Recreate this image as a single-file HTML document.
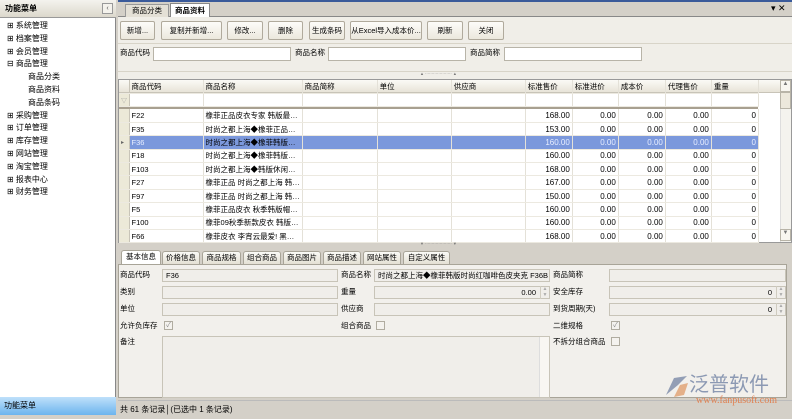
<!DOCTYPE html>
<html><head><meta charset="utf-8"><style>
*{box-sizing:border-box;margin:0;padding:0}
body{width:792px;height:419px;overflow:hidden;background:#d4d0c8;font:7.5px "Liberation Sans","Noto Sans CJK SC",sans-serif;color:#000;position:relative}
.a{position:absolute;white-space:nowrap}
.btn{position:absolute;top:21px;height:19px;border:1px solid #b0aa9c;border-radius:2px;background:linear-gradient(#fdfcf9,#ece8dd);text-align:center;line-height:17px;font-size:7.5px;white-space:nowrap}
.inp{position:absolute;height:14px;background:#fff;border:1px solid #b8b4a8}
.fin{position:absolute;height:13px;background:#f0eeea;border:1px solid #c8c4b8;font-size:7.5px;line-height:11px;padding:0 3px;white-space:nowrap;overflow:hidden}
.lbl{position:absolute;font-size:7.5px;white-space:nowrap;line-height:11px}
table{border-collapse:collapse;position:absolute;left:119px;table-layout:fixed}
td{border-right:1px solid #e4e1d8;border-bottom:1px solid #ece9e0;height:13.4px;padding:0 2px;white-space:nowrap;overflow:hidden;font-size:7.5px}
td.r{font-size:8px}
.r{text-align:right}
tr.sel td{background:#7b98dc;color:#e8eeff}
.ri{background:#ece9d8;border-right:1px solid #c8c4b8}
.tab{position:absolute;top:251px;height:13px;border:1px solid #a8a498;border-bottom:none;border-radius:3px 3px 0 0;background:linear-gradient(#fafaf6,#e4e0d4);text-align:center;line-height:12px;font-size:7.5px;white-space:nowrap}
.chk{position:absolute;width:9px;height:9px;border:1px solid #b0aca0;background:#f4f2ee;font-size:7px;line-height:7px;text-align:center;color:#888}
.spin{position:absolute;width:9px;height:13px;border-left:1px solid #d0ccc0;font-size:5px;color:#aaa;text-align:center;line-height:6px}
</style></head><body>
<div class="a" style="left:0;top:0;width:116px;height:419px;background:#fff;border-right:1px solid #888"></div>
<div class="a" style="left:0;top:0;width:116px;height:18px;background:linear-gradient(#f4f3ee,#dcd8cc);border-bottom:1px solid #999;font-weight:bold;font-size:8px;line-height:18px;padding-left:5px">功能菜单</div>
<div class="a" style="left:102px;top:3px;width:11px;height:11px;border:1px solid #999;background:#f4f2ec;font-size:7px;line-height:9px;text-align:center;color:#555">‹</div>
<div class="a" style="left:0;top:397px;width:116px;height:18px;background:linear-gradient(#bfe0fa,#6cb4ee);font-size:8px;line-height:18px;padding-left:4px">功能菜单</div>
<div class="a" style="left:0;top:415px;width:116px;height:4px;background:#d4d0c8"></div>
<div class="a" style="left:7px;top:20px;font-size:8px;line-height:12.8px">
<div>⊞ 系统管理</div><div>⊞ 档案管理</div><div>⊞ 会员管理</div><div>⊟ 商品管理</div>
<div style="padding-left:21px">商品分类</div><div style="padding-left:21px">商品资料</div><div style="padding-left:21px">商品条码</div>
<div>⊞ 采购管理</div><div>⊞ 订单管理</div><div>⊞ 库存管理</div><div>⊞ 网站管理</div><div>⊞ 淘宝管理</div><div>⊞ 报表中心</div><div>⊞ 财务管理</div>
</div>
<div class="a" style="left:118px;top:0;width:674px;height:2px;background:#3a5a9a"></div>
<div class="a" style="left:118px;top:16px;width:674px;height:1px;background:#888"></div>
<div class="a" style="left:125px;top:4px;width:44px;height:13px;border:1px solid #999;border-bottom:none;background:#e4e0d6;text-align:center;line-height:12px">商品分类</div>
<div class="a" style="left:170px;top:3px;width:40px;height:14px;border:1px solid #888;border-bottom:none;background:#fff;text-align:center;line-height:13px;font-weight:bold">商品资料</div>
<div class="a" style="left:771px;top:3px;font-size:9px">▾ ✕</div>
<div class="a" style="left:118px;top:17px;width:674px;height:62px;background:#f0eee8"></div>
<div class="btn" style="left:120px;width:35px">新增...</div>
<div class="btn" style="left:161px;width:61px">复制并新增...</div>
<div class="btn" style="left:227px;width:36px">修改...</div>
<div class="btn" style="left:268px;width:35px">删除</div>
<div class="btn" style="left:309px;width:36px">生成条码</div>
<div class="btn" style="left:350px;width:72px;overflow:hidden">从Excel导入成本价...</div>
<div class="btn" style="left:427px;width:36px">刷新</div>
<div class="btn" style="left:468px;width:36px">关闭</div>
<div class="a" style="left:118px;top:43px;width:674px;height:1px;background:#d8d4c8"></div>
<div class="lbl" style="left:120px;top:47px">商品代码</div><div class="inp" style="left:153px;top:47px;width:138px"></div>
<div class="lbl" style="left:295px;top:47px">商品名称</div><div class="inp" style="left:328px;top:47px;width:138px"></div>
<div class="lbl" style="left:470px;top:47px">商品简称</div><div class="inp" style="left:504px;top:47px;width:138px"></div>
<div class="a" style="left:118px;top:71px;width:674px;height:1px;background:#d8d4c8"></div>
<div class="a" style="left:420px;top:71px;font-size:4px;color:#777">▲ ···················· ▲</div>
<div class="a" style="left:118px;top:79px;width:674px;height:164px;background:#fff;border:1px solid #999"></div>
<div class="a" style="left:119px;top:80px;width:661px;height:13px;background:linear-gradient(#fbfaf6,#e8e4d8);border-bottom:1px solid #c8c4b8"></div>
<table style="top:80px;width:640px">
<colgroup><col style="width:10px"><col style="width:74px"><col style="width:99px"><col style="width:75px"><col style="width:74px"><col style="width:74px"><col style="width:47px"><col style="width:46px"><col style="width:47px"><col style="width:46px"><col style="width:47px"></colgroup>
<tr><td class="ri" style="background:transparent"></td><td>商品代码</td><td>商品名称</td><td>商品简称</td><td>单位</td><td>供应商</td><td>标准售价</td><td>标准进价</td><td>成本价</td><td>代理售价</td><td>重量</td></tr>
<tr><td class="ri" style="font-size:6px;color:#999">▽</td><td></td><td></td><td></td><td></td><td></td><td></td><td></td><td></td><td></td><td></td></tr>
</table>
<div class="a" style="left:119px;top:107px;width:639px;height:2px;background:#a8a090"></div>
<table style="top:109px;width:640px">
<colgroup><col style="width:10px"><col style="width:74px"><col style="width:99px"><col style="width:75px"><col style="width:74px"><col style="width:74px"><col style="width:47px"><col style="width:46px"><col style="width:47px"><col style="width:46px"><col style="width:47px"></colgroup>
<tr><td class="ri"></td><td>F22</td><td>橡菲正品皮衣专家 韩版最…</td><td></td><td></td><td></td><td class="r">168.00</td><td class="r">0.00</td><td class="r">0.00</td><td class="r">0.00</td><td class="r">0</td></tr>
<tr><td class="ri"></td><td>F35</td><td>时尚之都上海◆橡菲正品…</td><td></td><td></td><td></td><td class="r">153.00</td><td class="r">0.00</td><td class="r">0.00</td><td class="r">0.00</td><td class="r">0</td></tr>
<tr class="sel"><td class="ri" style="background:#ece9d8;color:#666;font-size:6px">▸</td><td>F36</td><td style="color:#000">时尚之都上海◆橡菲韩版…</td><td></td><td></td><td></td><td class="r">160.00</td><td class="r">0.00</td><td class="r">0.00</td><td class="r">0.00</td><td class="r">0</td></tr>
<tr><td class="ri"></td><td>F18</td><td>时尚之都上海◆橡菲韩版…</td><td></td><td></td><td></td><td class="r">160.00</td><td class="r">0.00</td><td class="r">0.00</td><td class="r">0.00</td><td class="r">0</td></tr>
<tr><td class="ri"></td><td>F103</td><td>时尚之都上海◆韩版休闲…</td><td></td><td></td><td></td><td class="r">168.00</td><td class="r">0.00</td><td class="r">0.00</td><td class="r">0.00</td><td class="r">0</td></tr>
<tr><td class="ri"></td><td>F27</td><td>橡菲正品 时尚之都上海 韩…</td><td></td><td></td><td></td><td class="r">167.00</td><td class="r">0.00</td><td class="r">0.00</td><td class="r">0.00</td><td class="r">0</td></tr>
<tr><td class="ri"></td><td>F97</td><td>橡菲正品 时尚之都上海 韩…</td><td></td><td></td><td></td><td class="r">150.00</td><td class="r">0.00</td><td class="r">0.00</td><td class="r">0.00</td><td class="r">0</td></tr>
<tr><td class="ri"></td><td>F5</td><td>橡菲正品皮衣 秋季韩版帽…</td><td></td><td></td><td></td><td class="r">160.00</td><td class="r">0.00</td><td class="r">0.00</td><td class="r">0.00</td><td class="r">0</td></tr>
<tr><td class="ri"></td><td>F100</td><td>橡菲09秋季新款皮衣 韩版…</td><td></td><td></td><td></td><td class="r">160.00</td><td class="r">0.00</td><td class="r">0.00</td><td class="r">0.00</td><td class="r">0</td></tr>
<tr><td class="ri"></td><td>F66</td><td>橡菲皮衣 李宵云最爱! 黑…</td><td></td><td></td><td></td><td class="r">168.00</td><td class="r">0.00</td><td class="r">0.00</td><td class="r">0.00</td><td class="r">0</td></tr>
</table>
<div class="a" style="left:780px;top:80px;width:11px;height:162px;background:#f4f3ee;border-left:1px solid #ddd"></div>
<div class="a" style="left:780px;top:80px;width:11px;height:12px;border:1px solid #b8b4a8;background:#f8f6f0;font-size:6px;text-align:center;color:#777">▲</div>
<div class="a" style="left:780px;top:92px;width:11px;height:17px;border:1px solid #b8b4a8;background:#ece8dc"></div>
<div class="a" style="left:780px;top:229px;width:11px;height:12px;border:1px solid #b8b4a8;background:#f8f6f0;font-size:6px;text-align:center;color:#777">▼</div>
<div class="a" style="left:420px;top:241px;font-size:4px;color:#777">▼ ···················· ▼</div>
<div class="tab" style="left:121px;width:40px;background:#fff;top:250px;height:14px">基本信息</div>
<div class="tab" style="left:162px;width:38px">价格信息</div>
<div class="tab" style="left:202px;width:39px">商品规格</div>
<div class="tab" style="left:243px;width:38px">组合商品</div>
<div class="tab" style="left:283px;width:38px">商品图片</div>
<div class="tab" style="left:323px;width:38px">商品描述</div>
<div class="tab" style="left:363px;width:38px">网站属性</div>
<div class="tab" style="left:403px;width:47px">自定义属性</div>
<div class="a" style="left:118px;top:264px;width:669px;height:134px;background:#f2f0ec;border:1px solid #a8a498"></div>
<div class="lbl" style="left:120px;top:269px">商品代码</div><div class="fin" style="left:162px;top:269px;width:176px">F36</div>
<div class="lbl" style="left:120px;top:286px">类别</div><div class="fin" style="left:162px;top:286px;width:176px"></div>
<div class="lbl" style="left:120px;top:303px">单位</div><div class="fin" style="left:162px;top:303px;width:176px"></div>
<div class="lbl" style="left:120px;top:320px">允许负库存</div><div class="chk" style="left:164px;top:321px">✓</div>
<div class="lbl" style="left:120px;top:336px">备注</div>
<div class="a" style="left:162px;top:336px;width:388px;height:62px;border:1px solid #c8c4b8;background:#f0eeea"></div>
<div class="a" style="left:539px;top:337px;width:10px;height:60px;border-left:1px solid #ddd;background:#f8f6f2"></div>
<div class="lbl" style="left:341px;top:269px">商品名称</div><div class="fin" style="left:374px;top:269px;width:176px">时尚之都上海◆橡菲韩版时尚红咖啡色皮夹克 F36B</div>
<div class="lbl" style="left:341px;top:286px">重量</div><div class="fin" style="left:374px;top:286px;width:176px;text-align:right;padding-right:13px">0.00</div><div class="spin" style="left:540px;top:286px">▲<br>▼</div>
<div class="lbl" style="left:341px;top:303px">供应商</div><div class="fin" style="left:374px;top:303px;width:176px"></div>
<div class="lbl" style="left:341px;top:320px">组合商品</div><div class="chk" style="left:376px;top:321px"></div>
<div class="lbl" style="left:553px;top:269px">商品简称</div><div class="fin" style="left:609px;top:269px;width:177px"></div>
<div class="lbl" style="left:553px;top:286px">安全库存</div><div class="fin" style="left:609px;top:286px;width:177px;text-align:right;padding-right:13px">0</div><div class="spin" style="left:776px;top:286px">▲<br>▼</div>
<div class="lbl" style="left:553px;top:303px">到货周期(天)</div><div class="fin" style="left:609px;top:303px;width:177px;text-align:right;padding-right:13px">0</div><div class="spin" style="left:776px;top:303px">▲<br>▼</div>
<div class="lbl" style="left:553px;top:320px">二维规格</div><div class="chk" style="left:611px;top:321px">✓</div>
<div class="lbl" style="left:553px;top:336px">不拆分组合商品</div><div class="chk" style="left:611px;top:337px"></div>
<div class="a" style="left:118px;top:400px;width:674px;height:19px;background:#d4d0c8;border-top:1px solid #bbb;font-size:8px;line-height:17px;padding-left:2px">共 61 条记录│(已选中 1 条记录)</div>
<svg class="a" style="left:663px;top:374px" width="26" height="24"><path d="M3 21 L11 4 L24 2 L15 11 Z" fill="#7a8aa8" opacity=".8"/><path d="M11 23 L17 11 L25 9 L21 21 Z" fill="#e0a070" opacity=".8"/></svg>
<div class="a" style="left:689px;top:372px;font-size:20px;color:#6a7ca0;opacity:.75;font-family:'Noto Sans CJK SC',sans-serif;line-height:22px">泛普软件</div>
<div class="a" style="left:696px;top:395px;font-size:10px;color:#e08050;font-family:'Liberation Serif',serif">www.fanpusoft.com</div>
</body></html>
